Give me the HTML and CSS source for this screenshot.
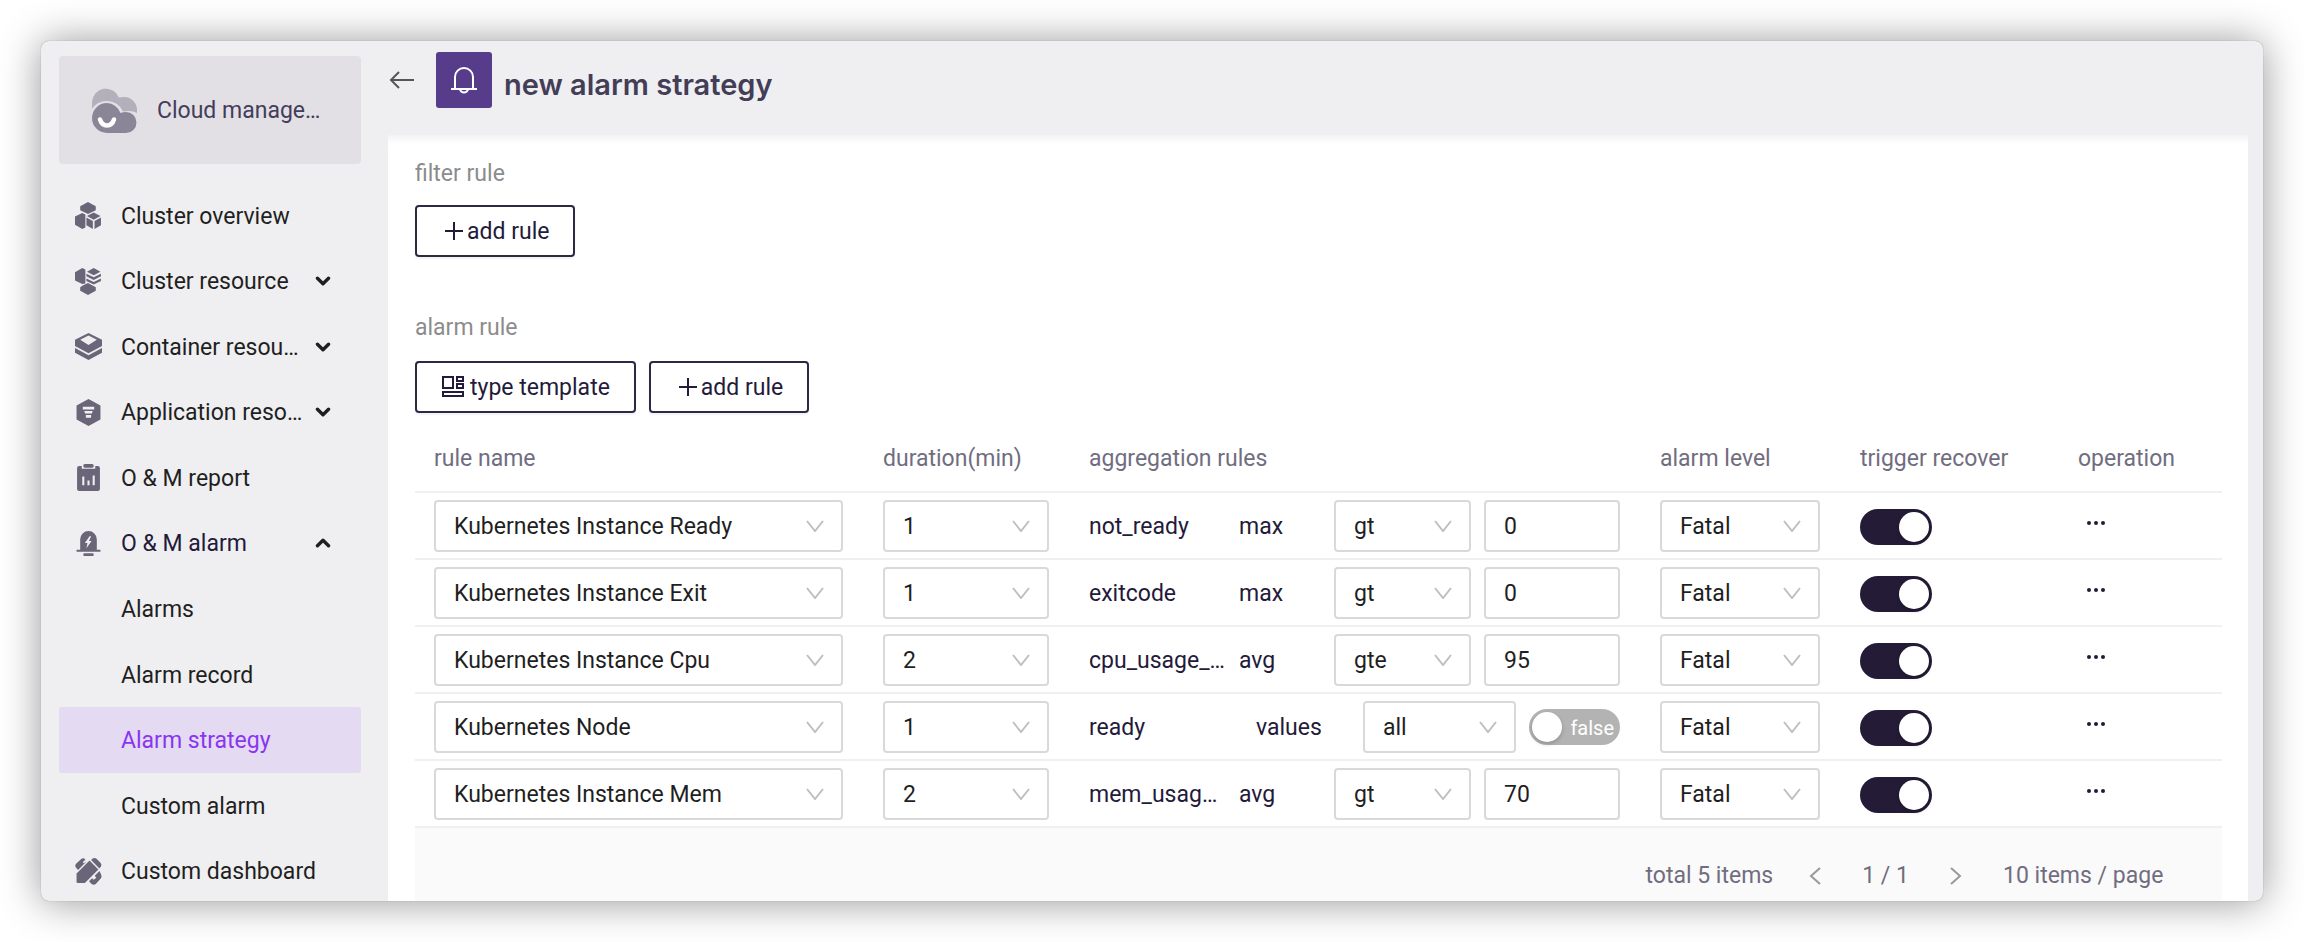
FILE: index.html
```html
<!DOCTYPE html>
<html lang="en">
<head>
  <meta charset="UTF-8" />
  <meta name="viewport" content="width=device-width, initial-scale=1.0"/>
  <title>new alarm strategy</title>
  <link rel="stylesheet" href="styles.css">
</head>
<body>
  <div class="window">
    <aside class="sidebar">
      <div class="brand">
        <svg class="brand-icon" viewBox="0 0 45 45">
          <path fill="#b4b0bb" d="M0 21V14A14 14 0 0 1 27 9.500Q29 9 32 9A13 13 0 0 1 45 21V25Q40 22 31 23.500Q26 13 15 13Q5 13 0 21Z"/>
          <path fill="#8b8598" d="M15 15A15 15 0 0 1 28.500 25Q31 24 34 24A10.500 10.500 0 0 1 34 45H15A15 15 0 0 1 15 15Z"/>
          <path fill="none" stroke="#fff" stroke-width="4.500" stroke-linecap="round" d="M8 31.500Q10 37.500 15 37.500Q20 37.500 22 31.500"/>
        </svg>
        <span>Cloud manage…</span>
      </div>
      <nav class="menu">
        <a class="menu-item" href="#">
          <svg class="menu-icon" viewBox="0 0 26 26">
            <path d="M12.500 0L20 4V8L12.500 11.500L5 8V4Z"/>
            <path d="M7 10.500L10 12V24.500L7 26L0 22V14Z"/>
            <path d="M18 10L24.500 13.500L18 17L11.500 13.500Z"/>
            <path d="M11 15L17.200 18.400V26L11 22.500Z"/>
            <path d="M25 15L18.800 18.400V26L25 22.500Z"/>
          </svg>
          <span>Cluster overview</span>
        </a>
        <a class="menu-item" href="#">
          <svg class="menu-icon" viewBox="0 0 26 26">
            <path d="M7 0L10 1.500V15L7 15.500L0 12V4Z"/>
            <path d="M18 0L24.500 3.500L18 7L11.500 3.500Z"/>
            <path d="M11 5.500L18 9L25 5.500V8L18 11.500L11 8Z"/>
            <path d="M11 10L18 13.500L25 10V12.500L18 16L11 12.500Z"/>
            <path d="M12.500 14.500L20 18.500V22L12.500 26L5 22V18.500L8 16.500Z"/>
          </svg>
          <span>Cluster resource</span>
          <svg class="menu-arrow" viewBox="0 0 14 9"><path d="M2 2L7 7L12 2"/></svg>
        </a>
        <a class="menu-item" href="#">
          <svg class="menu-icon" viewBox="0 0 26 26">
            <path fill-rule="evenodd" d="M13 0L26 6.500V12.500L13 19.500L0 12.500V6.500ZM13 2.500L5 6.500L13 11.500L21 6.500Z"/>
            <path d="M0 14.500L13 21.500L26 14.500V19L13 26L0 19Z"/>
          </svg>
          <span>Container resou…</span>
          <svg class="menu-arrow" viewBox="0 0 14 9"><path d="M2 2L7 7L12 2"/></svg>
        </a>
        <a class="menu-item" href="#">
          <svg class="menu-icon" viewBox="0 0 26 26">
            <path fill-rule="evenodd" d="M13 0L24.500 6.300V19.700L13 26L1.500 19.700V6.300ZM7.500 7.500V10H18.500V7.500ZM9 11.500L9.700 14H16.300L17 11.500ZM10.500 15.500V18H15.500V15.500Z"/>
          </svg>
          <span>Application reso…</span>
          <svg class="menu-arrow" viewBox="0 0 14 9"><path d="M2 2L7 7L12 2"/></svg>
        </a>
        <a class="menu-item" href="#">
          <svg class="menu-icon" viewBox="0 0 26 26">
            <path fill-rule="evenodd" d="M4 2H6.500V4.500H19.500V2H22Q24 2 24 4V24Q24 26 22 26H4Q2 26 2 24V4Q2 2 4 2ZM7 12V20.500H9V12ZM12 16V20.500H14V16ZM17 11V20.500H19V11Z"/>
            <rect x="8" y="0" width="10" height="3.500" rx="1.500"/>
          </svg>
          <span>O &amp; M report</span>
        </a>
        <a class="menu-item menu-item-open" href="#">
          <svg class="menu-icon" viewBox="0 0 26 26">
            <path fill-rule="evenodd" d="M5 19V9A8 8 0 0 1 21 9V19H24.500V21H1.500V19ZM14 6L9.500 12.500H12L11 17.500L16 10.500H13.500L15.500 6Z"/>
            <rect x="8" y="22.500" width="10" height="2.500" rx="1"/>
          </svg>
          <span>O &amp; M alarm</span>
          <svg class="menu-arrow" viewBox="0 0 14 9"><path d="M2 7L7 2L12 7"/></svg>
        </a>
        <a class="menu-item menu-sub" href="#"><span>Alarms</span></a>
        <a class="menu-item menu-sub" href="#"><span>Alarm record</span></a>
        <a class="menu-item menu-sub menu-item-active" href="#"><span>Alarm strategy</span></a>
        <a class="menu-item menu-sub" href="#"><span>Custom alarm</span></a>
        <a class="menu-item" href="#">
          <svg class="menu-icon" viewBox="0 0 26 26">
            <path d="M1.500 23V15L14 2.500L22.500 11L9.500 24H2.500Q1.500 24 1.500 23Z"/>
            <path d="M16 1.500Q18.500 -1 21 1L24.500 4.500Q26.500 7 24 9.500L23.500 10L15.500 2Z"/>
            <path d="M1 5.500L6 1Q8 -0.500 10 1.500L7.500 4L8.500 5L11.500 3L3 11.500L1 9.500Q-0.500 7.500 1 5.500Z"/>
            <path d="M23.500 12.500L25 15.500Q26 18 25 19.500L20 25Q18 26.500 16 25L13.500 22.500L16.500 19.500L18 21L20.500 19L19 17Z"/>
          </svg>
          <span>Custom dashboard</span>
        </a>
      </nav>
    </aside>

    <main class="main">
      <header class="header">
        <button class="back" type="button" aria-label="back">
          <svg viewBox="0 0 26 20"><path d="M10 2L2 10L10 18M2 10H25"/></svg>
        </button>
        <div class="header-icon">
          <svg viewBox="0 0 28 28"><path d="M1 23H27M5 23V11A9 9 0 0 1 23 11V23M10 23.500Q11 26.500 14 26.500Q17 26.500 18 23.500"/></svg>
        </div>
        <h1>new alarm strategy</h1>
      </header>

      <div class="panel">
        <section class="section">
          <h2>filter rule</h2>
          <div class="buttons">
            <button class="btn" type="button">
              <svg class="plus" viewBox="0 0 18 18"><path d="M9 0V18M0 9H18"/></svg><span>add rule</span>
            </button>
          </div>
        </section>

        <section class="section">
          <h2>alarm rule</h2>
          <div class="buttons">
            <button class="btn btn-template" type="button">
              <svg class="template-icon" viewBox="0 0 22 22"><path d="M1 1H11V12H1ZM15 1H21V5H15ZM15 8H21V12H15ZM1 16H21V20H1Z"/></svg><span>type template</span>
            </button>
            <button class="btn" type="button">
              <svg class="plus" viewBox="0 0 18 18"><path d="M9 0V18M0 9H18"/></svg><span>add rule</span>
            </button>
          </div>
        </section>

        <table class="rules">
          <colgroup>
            <col class="col-name"><col class="col-duration"><col><col class="col-level"><col class="col-trigger"><col class="col-operation">
          </colgroup>
          <thead>
            <tr>
              <th>rule name</th>
              <th>duration(min)</th>
              <th>aggregation rules</th>
              <th>alarm level</th>
              <th>trigger recover</th>
              <th>operation</th>
            </tr>
          </thead>
          <tbody>
            <tr>
              <td><select aria-label="rule name"><option>Kubernetes Instance Ready</option></select></td>
              <td><select aria-label="duration"><option>1</option></select></td>
              <td>
                <div class="agg">
                  <span>not_ready</span><span>max</span>
                  <select aria-label="operator"><option>gt</option></select>
                  <input class="text" type="text" value="0" aria-label="value">
                </div>
              </td>
              <td><select aria-label="alarm level"><option>Fatal</option></select></td>
              <td><input class="switch" type="checkbox" checked aria-label="trigger recover"></td>
              <td><button class="more" type="button" aria-label="more"><svg viewBox="0 0 18 4"><circle cx="2" cy="2" r="2"/><circle cx="9" cy="2" r="2"/><circle cx="16" cy="2" r="2"/></svg></button></td>
            </tr>
            <tr>
              <td><select aria-label="rule name"><option>Kubernetes Instance Exit</option></select></td>
              <td><select aria-label="duration"><option>1</option></select></td>
              <td>
                <div class="agg">
                  <span>exitcode</span><span>max</span>
                  <select aria-label="operator"><option>gt</option></select>
                  <input class="text" type="text" value="0" aria-label="value">
                </div>
              </td>
              <td><select aria-label="alarm level"><option>Fatal</option></select></td>
              <td><input class="switch" type="checkbox" checked aria-label="trigger recover"></td>
              <td><button class="more" type="button" aria-label="more"><svg viewBox="0 0 18 4"><circle cx="2" cy="2" r="2"/><circle cx="9" cy="2" r="2"/><circle cx="16" cy="2" r="2"/></svg></button></td>
            </tr>
            <tr>
              <td><select aria-label="rule name"><option>Kubernetes Instance Cpu</option></select></td>
              <td><select aria-label="duration"><option>2</option></select></td>
              <td>
                <div class="agg">
                  <span>cpu_usage_…</span><span>avg</span>
                  <select aria-label="operator"><option>gte</option></select>
                  <input class="text" type="text" value="95" aria-label="value">
                </div>
              </td>
              <td><select aria-label="alarm level"><option>Fatal</option></select></td>
              <td><input class="switch" type="checkbox" checked aria-label="trigger recover"></td>
              <td><button class="more" type="button" aria-label="more"><svg viewBox="0 0 18 4"><circle cx="2" cy="2" r="2"/><circle cx="9" cy="2" r="2"/><circle cx="16" cy="2" r="2"/></svg></button></td>
            </tr>
            <tr>
              <td><select aria-label="rule name"><option>Kubernetes Node</option></select></td>
              <td><select aria-label="duration"><option>1</option></select></td>
              <td>
                <div class="agg agg-values">
                  <span>ready</span><span>values</span>
                  <select aria-label="values"><option>all</option></select>
                  <label class="switch-text"><input class="switch" type="checkbox"><span>false</span></label>
                </div>
              </td>
              <td><select aria-label="alarm level"><option>Fatal</option></select></td>
              <td><input class="switch" type="checkbox" checked aria-label="trigger recover"></td>
              <td><button class="more" type="button" aria-label="more"><svg viewBox="0 0 18 4"><circle cx="2" cy="2" r="2"/><circle cx="9" cy="2" r="2"/><circle cx="16" cy="2" r="2"/></svg></button></td>
            </tr>
            <tr>
              <td><select aria-label="rule name"><option>Kubernetes Instance Mem</option></select></td>
              <td><select aria-label="duration"><option>2</option></select></td>
              <td>
                <div class="agg">
                  <span>mem_usag…</span><span>avg</span>
                  <select aria-label="operator"><option>gt</option></select>
                  <input class="text" type="text" value="70" aria-label="value">
                </div>
              </td>
              <td><select aria-label="alarm level"><option>Fatal</option></select></td>
              <td><input class="switch" type="checkbox" checked aria-label="trigger recover"></td>
              <td><button class="more" type="button" aria-label="more"><svg viewBox="0 0 18 4"><circle cx="2" cy="2" r="2"/><circle cx="9" cy="2" r="2"/><circle cx="16" cy="2" r="2"/></svg></button></td>
            </tr>
          </tbody>
        </table>

        <div class="pagination">
          <span>total 5 items</span>
          <button class="page-btn" type="button" aria-label="previous page"><svg viewBox="0 0 12 20"><path d="M11 2L2 10L11 18"/></svg></button>
          <span>1 / 1</span>
          <button class="page-btn page-next" type="button" aria-label="next page"><svg viewBox="0 0 12 20"><path d="M1 2L10 10L1 18"/></svg></button>
          <select class="page-size" aria-label="page size"><option>10 items / page</option></select>
        </div>
      </div>
    </main>
  </div>
</body>
</html>
```
FILE: styles.css
```css
* {
  box-sizing: border-box;
}
body {
  margin: 0;
  padding: 41px;
  height: 100vh;
  background: #fff;
  font-family: Roboto, sans-serif;
  font-size: 23px;
  line-height: 32px;
  color: #1f1f1f;
}
button, input, select {
  font: inherit;
  color: inherit;
  margin: 0;
}
button {
  cursor: pointer;
}
.window {
  display: flex;
  height: 100%;
  overflow: hidden;
  border-radius: 8px;
  background: #efeff1;
  box-shadow: 0 0 1px rgba(0, 0, 0, 0.4), 0 1px 40px rgba(0, 0, 0, 0.42);
}

/* sidebar */
.sidebar {
  display: flex;
  flex-direction: column;
  flex: none;
  width: 338px;
  padding: 15px 18px 0;
}
.brand {
  display: flex;
  align-items: center;
  gap: 20px;
  height: 108px;
  padding-left: 33px;
  border-radius: 4px;
  background: #e2e0e5;
  color: #433d5b;
}
.brand span, .menu-item span, .btn span, .agg > span {
  padding-top: 2px;
}
.brand-icon {
  width: 45px;
  height: 45px;
}
.menu {
  display: grid;
  grid-auto-rows: 1fr;
  flex: 1;
  margin-top: 19px;
  margin-bottom: -3px;
}
.menu-item {
  display: flex;
  align-items: center;
  padding: 0 30px 0 16px;
  border-radius: 3px;
  color: inherit;
  text-decoration: none;
}
.menu-icon {
  width: 27px;
  height: 27px;
  margin-right: 19px;
  fill: #6b6579;
}
.menu-arrow {
  width: 16px;
  height: 10px;
  margin-left: auto;
  fill: none;
  stroke: #1f1f1f;
  stroke-width: 3;
  stroke-linecap: round;
  stroke-linejoin: round;
}
.menu-sub {
  padding-left: 62px;
}
.menu-item-open {
  color: #241a3a;
}
.menu-item-active {
  background: #e4daf2;
  color: #8a35f0;
}

/* header */
.main {
  display: flex;
  flex-direction: column;
  flex: 1;
  min-width: 0;
}
.header {
  display: flex;
  align-items: flex-start;
  flex: none;
  height: 94px;
  padding: 11px 10px 0;
}
.back {
  padding: 0;
  border: 0;
  background: none;
  height: 56px;
}
.back svg {
  display: block;
  width: 26px;
  height: 20px;
  fill: none;
  stroke: #555;
  stroke-width: 2;
}
.header-icon {
  display: flex;
  align-items: center;
  justify-content: center;
  width: 56px;
  height: 56px;
  margin: 0 12px 0 21px;
  border-radius: 3px;
  background: #573c8c;
}
.header-icon svg {
  width: 28px;
  height: 28px;
  fill: none;
  stroke: #fff;
  stroke-width: 2;
}
h1 {
  margin: 0;
  font-family: Inter, sans-serif;
  font-size: 29px;
  font-weight: 600;
  line-height: 66px;
  color: #433d57;
}

/* panel */
.panel {
  flex: 1;
  min-height: 0;
  margin: 0 15px 0 9px;
  padding: 23px 26px 0 27px;
  overflow: hidden;
  background: #fff;
  box-shadow: inset 0 12px 10px -10px rgba(0, 0, 0, 0.08);
}
.section {
  margin-bottom: 55px;
}
.section + .section {
  margin-bottom: 12px;
}
h2 {
  margin: 0 0 15px;
  font-size: 23px;
  font-weight: 400;
  line-height: 32px;
  color: #8c8c8c;
}
.section + .section h2 {
  margin-bottom: 17px;
}
.buttons {
  display: flex;
  gap: 13px;
}
.btn {
  display: flex;
  align-items: center;
  gap: 4px;
  height: 52px;
  padding: 0 24px 0 28px;
  border: 2px solid #2e2746;
  border-radius: 4px;
  background: #fff;
  color: #241a3a;
  box-shadow: 0 2px 2px rgba(36, 26, 58, 0.06);
}
.btn svg {
  fill: none;
  stroke: #241a3a;
  stroke-width: 2;
}
.btn-template {
  gap: 6px;
  padding-left: 25px;
}
.plus {
  width: 18px;
  height: 18px;
}
.template-icon {
  width: 22px;
  height: 22px;
}

/* rules table */
.rules {
  width: 100%;
  table-layout: fixed;
  border-collapse: collapse;
}
.col-name {
  width: 448px;
}
.col-duration {
  width: 206px;
}
.col-level {
  width: 200px;
}
.col-trigger {
  width: 218px;
}
.col-operation {
  width: 164px;
}
.rules th {
  height: 67px;
  padding: 2px 20px 0;
  border-bottom: 2px solid #f0f0f0;
  font-weight: 400;
  text-align: left;
  color: #716d7f;
}
.rules td {
  height: 67px;
  padding: 0 20px;
  border-bottom: 2px solid #f0f0f0;
  color: #241a3a;
}
.rules th:first-child, .rules td:first-child {
  padding-left: 19px;
}
.rules select, .text {
  display: block;
  width: 100%;
  height: 52px;
  padding: 2px 18px 0;
  border: 2px solid #d9d9d9;
  border-radius: 4px;
  background: #fff;
  color: #1f1f1f;
}
.rules select {
  appearance: none;
  background: #fff url("data:image/svg+xml,%3Csvg xmlns='http://www.w3.org/2000/svg' width='18' height='12' viewBox='0 0 18 12'%3E%3Cpath d='M1 1L9 11L17 1' fill='none' stroke='%23bfbfbf' stroke-width='2'/%3E%3C/svg%3E") no-repeat right 17px center;
}
.agg {
  display: grid;
  grid-template-columns: 137fr 82fr 137fr 136fr;
  gap: 13px;
  align-items: center;
}
.agg-values {
  grid-template-columns: 154fr 94fr 153fr 91fr;
}
.agg > * {
  min-width: 0;
  white-space: nowrap;
}
.switch {
  display: block;
  appearance: none;
  width: 72px;
  height: 36px;
  border-radius: 18px;
  background: #b3b3b3;
  cursor: pointer;
}
.switch::before {
  content: "";
  display: block;
  width: 30px;
  height: 30px;
  margin: 3px;
  border-radius: 50%;
  background: #fff;
  box-shadow: 0 2px 4px rgba(0, 0, 0, 0.2);
}
.switch:checked {
  background: #241b36;
}
.switch:checked::before {
  margin-left: 39px;
}
.rules td > .switch {
  margin-top: 3px;
}
.switch-text {
  position: relative;
}
.switch-text .switch {
  width: 100%;
}
.switch-text span {
  position: absolute;
  top: 3px;
  right: 6px;
  font-size: 20px;
  color: #fff;
}
.more {
  display: block;
  height: 30px;
  padding: 0 9px 6px;
  border: 0;
  background: none;
}
.more svg {
  display: block;
  width: 18px;
  height: 4px;
  fill: #241a3a;
}

/* pagination */
.pagination {
  display: flex;
  align-items: center;
  justify-content: flex-end;
  height: 96px;
  padding-right: 58px;
  background: #fafafa;
  color: #716d7f;
}
.page-btn {
  padding: 0;
  margin: 0 41px 0 36px;
  border: 0;
  background: none;
}
.page-next {
  margin-left: 41px;
}
.page-btn svg {
  display: block;
  width: 12px;
  height: 20px;
  fill: none;
  stroke: #999;
  stroke-width: 2;
}
.page-size {
  appearance: none;
  padding: 0;
  border: 0;
  background: none;
}
```
